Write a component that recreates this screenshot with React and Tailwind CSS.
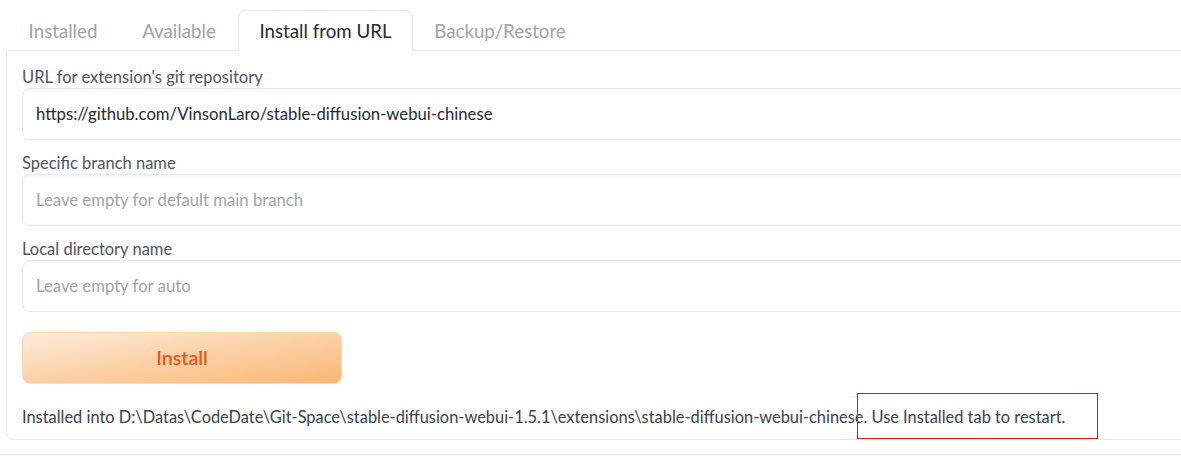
import React from 'react';

const tabs = [
  { label: 'Installed', w: 'w-[114px]' },
  { label: 'Available', w: 'w-[118px]' },
  { label: 'Install from URL', w: 'w-[175px]', active: true },
  { label: 'Backup/Restore', w: 'w-[174px]' },
];

function Field({ label, value, placeholder }) {
  return (
    <div className="flex flex-col">
      <label className="h-[22px] leading-[22px] pt-[2px] text-[16.5px] text-[#4b5563] mb-[2px]">{label}</label>
      <div className="h-[52px] rounded-lg border border-[#e5e7eb] bg-white shadow-[inset_0_2px_3px_rgba(0,0,0,0.035)] flex items-center px-[13px] pt-[2px]">
        {value ? (
          <span className="text-[16.7px] text-[#1f2937]">{value}</span>
        ) : (
          <span className="text-[16.7px] text-[#9ca3af]">{placeholder}</span>
        )}
      </div>
    </div>
  );
}

export default function App() {
  return (
    <div
      className="w-[1181px] h-[459px] overflow-hidden bg-white relative"
      style={{ fontFamily: 'Lato, "Noto Sans", sans-serif' }}
    >
      <div className="w-[1230px] pl-[6px] pt-[10px]">
        {/* tab bar */}
        <div className="flex h-[40px] relative z-10">
          {tabs.map((t) => (
            <div
              key={t.label}
              className={
                t.active
                  ? `${t.w} flex items-center justify-center pt-[2px] text-[18.7px] text-[#1f2937] bg-white border border-[#e5e7eb] border-b-white rounded-t-lg h-[41px]`
                  : `${t.w} flex items-center justify-center pt-[2px] text-[18.7px] text-[#9ca3af]`
              }
            >
              {t.label}
            </div>
          ))}
        </div>

        {/* panel */}
        <div className="border border-[#e5e7eb] rounded-b-lg pt-[13px] pb-[12px] px-[15px]">
          <div className="flex flex-col gap-[10px]">
            <Field
              label="URL for extension's git repository"
              value="https://github.com/VinsonLaro/stable-diffusion-webui-chinese"
            />
            <Field label="Specific branch name" placeholder="Leave empty for default main branch" />
            <Field label="Local directory name" placeholder="Leave empty for auto" />
          </div>

          <button className="mt-[20px] w-[320px] h-[52px] rounded-lg border border-[#fdd9b0] bg-gradient-to-br from-[#fdebd8] to-[#f9b671] text-[19.5px] font-semibold text-[#e8561a]">
            Install
          </button>

          <div className="mt-[21px] h-[22px] leading-[22px] pt-[1px] text-[16.4px] text-[#374151] whitespace-nowrap">
            Installed into D:\Datas\CodeDate\Git-Space\stable-diffusion-webui-1.5.1\extensions\stable-diffusion-webui-chinese. Use Installed tab to restart.
          </div>
        </div>
      </div>

      <div className="mt-[14px] border-t border-[#e5e7eb] w-full" />

      {/* annotation box */}
      <div className="absolute left-[857px] top-[393px] w-[241px] h-[46px] border border-[#d0212b]" />
    </div>
  );
}
